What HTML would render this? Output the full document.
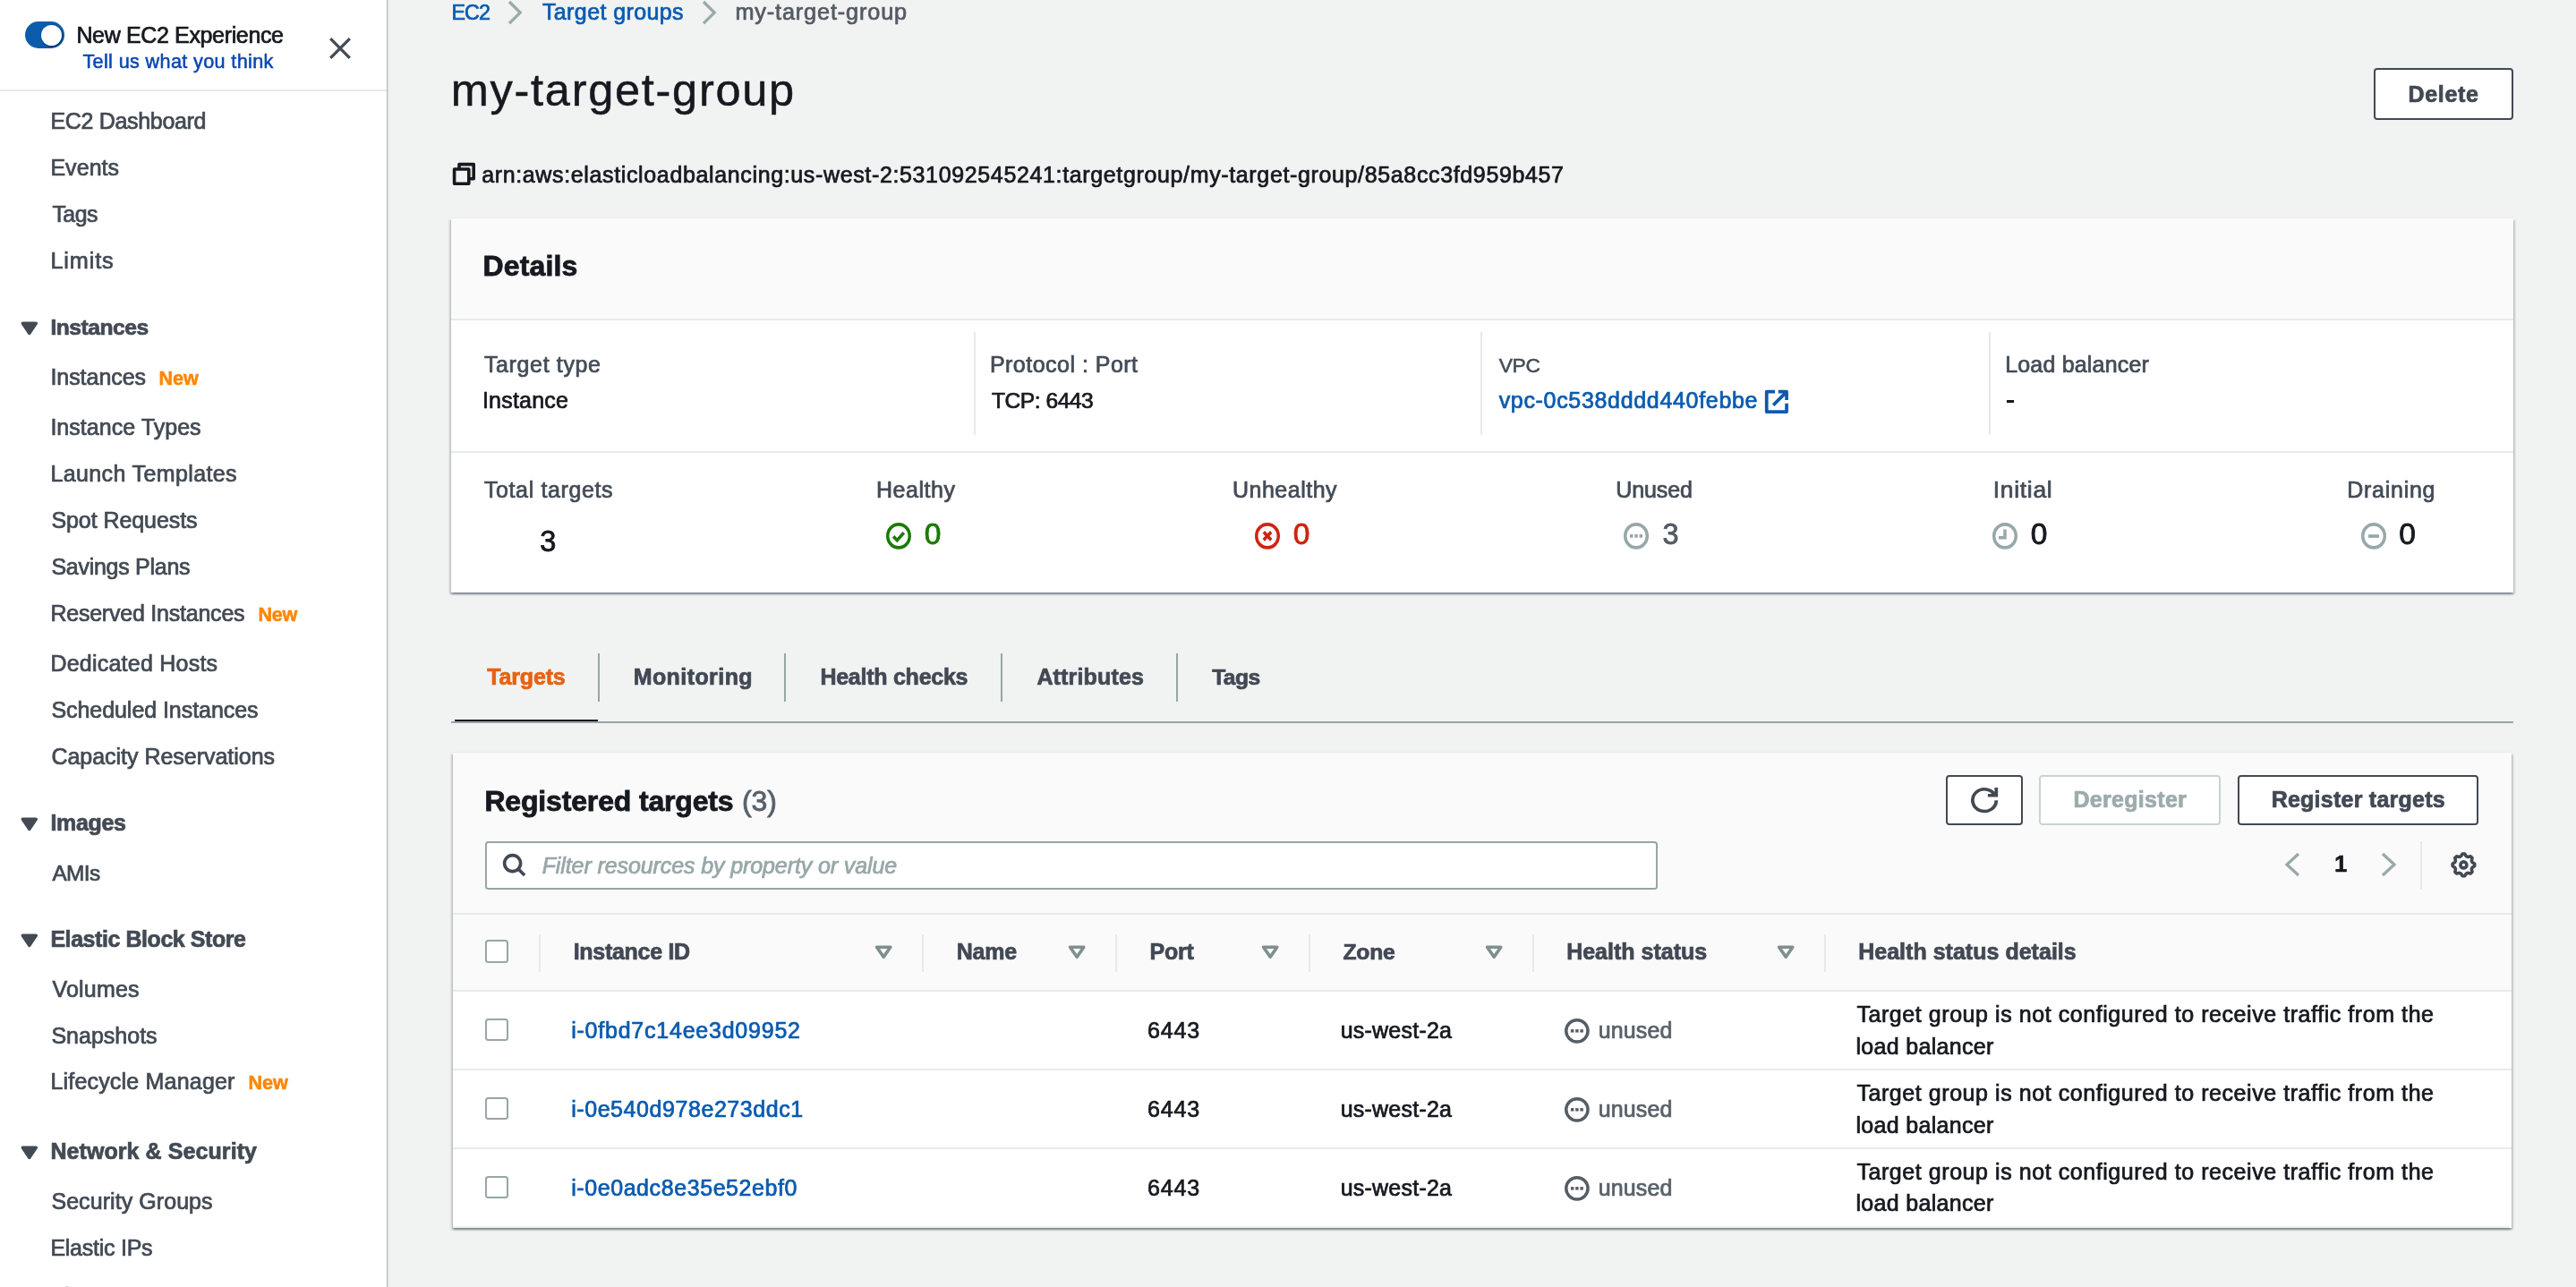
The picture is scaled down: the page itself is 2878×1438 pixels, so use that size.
<!DOCTYPE html>
<html><head><meta charset="utf-8"><title>Target groups | EC2 Management Console</title>
<style>
html,body{margin:0;padding:0;width:2878px;height:1438px;overflow:hidden}
body{width:2878px;height:1438px;overflow:hidden;background:#f1f2f2;position:relative;font-family:"Liberation Sans", sans-serif;}
body>div,body>svg,#t>span{position:absolute;display:block}
#t{position:absolute;left:0;top:0;width:2878px;height:1438px;overflow:hidden;will-change:transform}
#t>span{white-space:pre;line-height:1;font-family:"Liberation Sans", sans-serif;-webkit-text-stroke-color:currentColor}
svg{overflow:visible}
</style></head><body>
<div style="left:0.00px;top:0.00px;width:432.00px;height:1438.00px;background:#fff"></div>
<div style="left:432.00px;top:0.00px;width:1.00px;height:1438.00px;background:#b3bdbf"></div>
<div style="left:433.00px;top:0.00px;width:1.50px;height:1438.00px;background:linear-gradient(to right,#d9dede,#f1f2f2)"></div>
<div style="left:0.00px;top:99.50px;width:431.50px;height:2.00px;background:#e6eaea"></div>
<div style="left:27.80px;top:24.00px;width:44.40px;height:30.00px;background:#0b5cab;border-radius:15px"></div>
<div style="left:45.80px;top:27.60px;width:23.40px;height:23.40px;background:#fff;border-radius:50%;box-shadow:1px 1.5px 2px rgba(0,20,50,.55)"></div>
<svg style="left:366.00px;top:40.00px" width="28.00" height="28.00" viewBox="0 0 28 28" ><path d="M3.2 3.2 L24.8 24.8 M24.8 3.2 L3.2 24.8" stroke="#444b55" stroke-width="3.3" fill="none"/></svg>
<svg style="left:18.45px;top:352.10px" width="29.60" height="29.60" viewBox="0 0 16 16" ><polygon points="4,5 12,5 8,11" fill="#434a54" stroke="#434a54" stroke-width="2" stroke-linejoin="round"/></svg>
<svg style="left:18.45px;top:905.85px" width="29.60" height="29.60" viewBox="0 0 16 16" ><polygon points="4,5 12,5 8,11" fill="#434a54" stroke="#434a54" stroke-width="2" stroke-linejoin="round"/></svg>
<svg style="left:18.45px;top:1035.85px" width="29.60" height="29.60" viewBox="0 0 16 16" ><polygon points="4,5 12,5 8,11" fill="#434a54" stroke="#434a54" stroke-width="2" stroke-linejoin="round"/></svg>
<svg style="left:18.45px;top:1273.35px" width="29.60" height="29.60" viewBox="0 0 16 16" ><polygon points="4,5 12,5 8,11" fill="#434a54" stroke="#434a54" stroke-width="2" stroke-linejoin="round"/></svg>
<svg style="left:562.80px;top:-4.10px" width="24.20" height="36.20" viewBox="0 0 24.20 36.20"><polyline points="6.00,6.00 18.20,18.10 6.00,30.20" fill="none" stroke="#9aa9aa" stroke-width="3.3"/></svg>
<svg style="left:779.50px;top:-4.10px" width="24.20" height="36.20" viewBox="0 0 24.20 36.20"><polyline points="6.00,6.00 18.20,18.10 6.00,30.20" fill="none" stroke="#9aa9aa" stroke-width="3.3"/></svg>
<svg style="left:503.70px;top:180.20px" width="28.80" height="28.80" viewBox="0 0 16 16" ><path d="M2 5h9v9H2z M5 5V2h9v9h-3" fill="none" stroke="#16191f" stroke-width="2" stroke-linejoin="round"/></svg>
<div style="left:2652.00px;top:76.20px;width:155.80px;height:57.60px;background:#fff;border:2px solid #424954;border-radius:4px;box-sizing:border-box"></div>
<div style="left:504.00px;top:242.80px;width:2304.00px;height:1.00px;background:#e8ebeb"></div>
<div style="left:504.00px;top:243.70px;width:2304.00px;height:418.30px;background:#fff;box-shadow:0 2px 2px 0 rgba(0,28,36,.3),2px 2px 2px 0 rgba(0,28,36,.15),-2px 2px 2px 0 rgba(0,28,36,.15)"></div>
<div style="left:504.00px;top:243.70px;width:2304.00px;height:112.50px;background:#fafafa"></div>
<div style="left:504.00px;top:356.20px;width:2304.00px;height:2.00px;background:#e6eaea"></div>
<div style="left:1088.00px;top:370.75px;width:2.00px;height:115.00px;background:#e6eaea"></div>
<div style="left:1653.75px;top:370.75px;width:2.00px;height:115.00px;background:#e6eaea"></div>
<div style="left:2221.75px;top:370.75px;width:2.00px;height:115.00px;background:#e6eaea"></div>
<div style="left:504.00px;top:504.25px;width:2304.00px;height:2.00px;background:#e6eaea"></div>
<svg style="left:1970.20px;top:434.15px" width="29.80" height="29.80" viewBox="0 0 16 16" ><path d="M9 2h5v5 M6 10l8-8 M14 9v5H2V2h5" fill="none" stroke="#0a5bb0" stroke-width="2" stroke-linejoin="round"/></svg>
<div style="left:2241.75px;top:447.00px;width:8.40px;height:3.20px;background:#16191f"></div>
<svg style="left:989.90px;top:584.10px" width="28.00" height="29.75" viewBox="0 0 16 16"  preserveAspectRatio="none"><circle cx="8" cy="8" r="7" fill="none" stroke="#1d7a06" stroke-width="2"/><polyline points="4.6,8.3 7,10.6 11.3,6" fill="none" stroke="#1d7a06" stroke-width="2"/></svg>
<svg style="left:1401.70px;top:584.10px" width="28.00" height="29.75" viewBox="0 0 16 16"  preserveAspectRatio="none"><circle cx="8" cy="8" r="7" fill="none" stroke="#cf2410" stroke-width="2"/><path d="M5.6 5.6l4.8 4.8M10.4 5.6l-4.8 4.8" fill="none" stroke="#cf2410" stroke-width="2"/></svg>
<svg style="left:1814.00px;top:584.10px" width="28.00" height="29.75" viewBox="0 0 16 16"  preserveAspectRatio="none"><circle cx="8" cy="8" r="7" fill="none" stroke="#98a7a8" stroke-width="2"/><rect x="4" y="7" width="2" height="2" fill="#98a7a8"/><rect x="7" y="7" width="2" height="2" fill="#98a7a8"/><rect x="10" y="7" width="2" height="2" fill="#98a7a8"/></svg>
<svg style="left:2226.05px;top:584.10px" width="28.00" height="29.75" viewBox="0 0 16 16"  preserveAspectRatio="none"><circle cx="8" cy="8" r="7" fill="none" stroke="#98a7a8" stroke-width="2"/><polyline points="8,4 8,9 4,9" fill="none" stroke="#98a7a8" stroke-width="2"/></svg>
<svg style="left:2637.60px;top:584.10px" width="28.00" height="29.75" viewBox="0 0 16 16"  preserveAspectRatio="none"><circle cx="8" cy="8" r="7" fill="none" stroke="#98a7a8" stroke-width="2"/><path d="M4.6 8.1h6.8" fill="none" stroke="#98a7a8" stroke-width="2"/></svg>
<div style="left:667.75px;top:730.00px;width:2.00px;height:54.00px;background:#97a6a7"></div>
<div style="left:875.75px;top:730.00px;width:2.00px;height:54.00px;background:#97a6a7"></div>
<div style="left:1117.75px;top:730.00px;width:2.00px;height:54.00px;background:#97a6a7"></div>
<div style="left:1313.50px;top:730.00px;width:2.00px;height:54.00px;background:#97a6a7"></div>
<div style="left:504.00px;top:806.00px;width:2304.00px;height:1.80px;background:#97a6a7"></div>
<div style="left:508.00px;top:803.90px;width:159.50px;height:2.15px;background:#16191f"></div>
<div style="left:505.50px;top:840.40px;width:2300.50px;height:1.00px;background:#e8ebeb"></div>
<div style="left:505.50px;top:841.30px;width:2300.50px;height:530.60px;background:#fff;box-shadow:0 2px 2px 0 rgba(0,28,36,.3),2px 2px 2px 0 rgba(0,28,36,.15),-2px 2px 2px 0 rgba(0,28,36,.15)"></div>
<div style="left:505.50px;top:1370.20px;width:2297.50px;height:1.40px;background:#eef1f1"></div>
<div style="left:505.50px;top:841.30px;width:2300.50px;height:265.00px;background:#fafafa"></div>
<div style="left:2174.25px;top:866.20px;width:85.25px;height:55.60px;background:#fff;border-radius:4px;box-sizing:border-box;border:2px solid #424954"></div>
<div style="left:2278.25px;top:866.20px;width:203.00px;height:55.60px;background:#fff;border-radius:4px;box-sizing:border-box;border:2px solid #c8d3d4"></div>
<div style="left:2500.00px;top:866.20px;width:269.25px;height:55.60px;background:#fff;border-radius:4px;box-sizing:border-box;border:2px solid #424954"></div>
<svg style="left:2201.80px;top:879.70px" width="30.20" height="28.30" viewBox="0 0 16 16"  preserveAspectRatio="none"><path d="M10 5h5V0 M15 8A7 7 0 1 1 14.33 5" fill="none" stroke="#424954" stroke-width="2" stroke-linejoin="miter"/></svg>
<div style="left:542.20px;top:940.00px;width:1309.80px;height:53.90px;background:#fff;border:2px solid #97a6a7;border-radius:3.5px;box-sizing:border-box"></div>
<svg style="left:560.20px;top:952.00px" width="28.80" height="28.80" viewBox="0 0 16 16" ><circle cx="7" cy="7" r="5" fill="none" stroke="#424954" stroke-width="2"/><path d="M10.6 10.6L14.5 14.5" stroke="#424954" stroke-width="2" fill="none"/></svg>
<svg style="left:2549.00px;top:948.05px" width="25.00" height="36.00" viewBox="0 0 25.00 36.00"><polyline points="19.00,6.00 6.00,18.00 19.00,30.00" fill="none" stroke="#9aa9aa" stroke-width="3.3"/></svg>
<svg style="left:2655.60px;top:948.05px" width="25.00" height="36.00" viewBox="0 0 25.00 36.00"><polyline points="6.00,6.00 19.00,18.00 6.00,30.00" fill="none" stroke="#9aa9aa" stroke-width="3.3"/></svg>
<div style="left:2703.50px;top:940.00px;width:2.00px;height:53.75px;background:#e6eaea"></div>
<svg style="left:2737.60px;top:951.60px" width="28.80" height="28.80" viewBox="0 0 16 16" ><path d="M14.85 8.00L14.85 8.12L14.85 8.24L14.84 8.36L14.83 8.48L14.82 8.60L14.81 8.72L14.68 8.82L14.53 8.92L14.38 9.01L14.22 9.10L14.07 9.18L13.93 9.26L13.80 9.34L13.69 9.42L13.59 9.50L13.50 9.58L13.43 9.66L13.36 9.74L13.31 9.83L13.27 9.92L13.23 10.01L13.19 10.10L13.15 10.19L13.12 10.28L13.08 10.37L13.05 10.46L13.02 10.56L13.01 10.66L13.00 10.77L13.01 10.89L13.03 11.02L13.05 11.16L13.09 11.30L13.13 11.46L13.18 11.62L13.22 11.80L13.27 11.97L13.31 12.15L13.32 12.31L13.25 12.40L13.17 12.49L13.09 12.58L13.01 12.67L12.93 12.76L12.84 12.84L12.76 12.93L12.67 13.01L12.58 13.09L12.49 13.17L12.40 13.25L12.31 13.32L12.15 13.31L11.97 13.27L11.80 13.22L11.62 13.18L11.46 13.13L11.30 13.09L11.16 13.05L11.02 13.03L10.89 13.01L10.77 13.00L10.66 13.01L10.56 13.02L10.46 13.05L10.37 13.08L10.28 13.12L10.19 13.15L10.10 13.19L10.01 13.23L9.92 13.27L9.83 13.31L9.74 13.36L9.66 13.43L9.58 13.50L9.50 13.59L9.42 13.69L9.34 13.80L9.26 13.93L9.18 14.07L9.10 14.22L9.01 14.38L8.92 14.53L8.82 14.68L8.72 14.81L8.60 14.82L8.48 14.83L8.36 14.84L8.24 14.85L8.12 14.85L8.00 14.85L7.88 14.85L7.76 14.85L7.64 14.84L7.52 14.83L7.40 14.82L7.28 14.81L7.18 14.68L7.08 14.53L6.99 14.38L6.90 14.22L6.82 14.07L6.74 13.93L6.66 13.80L6.58 13.69L6.50 13.59L6.42 13.50L6.34 13.43L6.26 13.36L6.17 13.31L6.08 13.27L5.99 13.23L5.90 13.19L5.81 13.15L5.72 13.12L5.63 13.08L5.54 13.05L5.44 13.02L5.34 13.01L5.23 13.00L5.11 13.01L4.98 13.03L4.84 13.05L4.70 13.09L4.54 13.13L4.38 13.18L4.20 13.22L4.03 13.27L3.85 13.31L3.69 13.32L3.60 13.25L3.51 13.17L3.42 13.09L3.33 13.01L3.24 12.93L3.16 12.84L3.07 12.76L2.99 12.67L2.91 12.58L2.83 12.49L2.75 12.40L2.68 12.31L2.69 12.15L2.73 11.97L2.78 11.80L2.82 11.62L2.87 11.46L2.91 11.30L2.95 11.16L2.97 11.02L2.99 10.89L3.00 10.77L2.99 10.66L2.98 10.56L2.95 10.46L2.92 10.37L2.88 10.28L2.85 10.19L2.81 10.10L2.77 10.01L2.73 9.92L2.69 9.83L2.64 9.74L2.57 9.66L2.50 9.58L2.41 9.50L2.31 9.42L2.20 9.34L2.07 9.26L1.93 9.18L1.78 9.10L1.62 9.01L1.47 8.92L1.32 8.82L1.19 8.72L1.18 8.60L1.17 8.48L1.16 8.36L1.15 8.24L1.15 8.12L1.15 8.00L1.15 7.88L1.15 7.76L1.16 7.64L1.17 7.52L1.18 7.40L1.19 7.28L1.32 7.18L1.47 7.08L1.62 6.99L1.78 6.90L1.93 6.82L2.07 6.74L2.20 6.66L2.31 6.58L2.41 6.50L2.50 6.42L2.57 6.34L2.64 6.26L2.69 6.17L2.73 6.08L2.77 5.99L2.81 5.90L2.85 5.81L2.88 5.72L2.92 5.63L2.95 5.54L2.98 5.44L2.99 5.34L3.00 5.23L2.99 5.11L2.97 4.98L2.95 4.84L2.91 4.70L2.87 4.54L2.82 4.38L2.78 4.20L2.73 4.03L2.69 3.85L2.68 3.69L2.75 3.60L2.83 3.51L2.91 3.42L2.99 3.33L3.07 3.24L3.16 3.16L3.24 3.07L3.33 2.99L3.42 2.91L3.51 2.83L3.60 2.75L3.69 2.68L3.85 2.69L4.03 2.73L4.20 2.78L4.38 2.82L4.54 2.87L4.70 2.91L4.84 2.95L4.98 2.97L5.11 2.99L5.23 3.00L5.34 2.99L5.44 2.98L5.54 2.95L5.63 2.92L5.72 2.88L5.81 2.85L5.90 2.81L5.99 2.77L6.08 2.73L6.17 2.69L6.26 2.64L6.34 2.57L6.42 2.50L6.50 2.41L6.58 2.31L6.66 2.20L6.74 2.07L6.82 1.93L6.90 1.78L6.99 1.62L7.08 1.47L7.18 1.32L7.28 1.19L7.40 1.18L7.52 1.17L7.64 1.16L7.76 1.15L7.88 1.15L8.00 1.15L8.12 1.15L8.24 1.15L8.36 1.16L8.48 1.17L8.60 1.18L8.72 1.19L8.82 1.32L8.92 1.47L9.01 1.62L9.10 1.78L9.18 1.93L9.26 2.07L9.34 2.20L9.42 2.31L9.50 2.41L9.58 2.50L9.66 2.57L9.74 2.64L9.83 2.69L9.92 2.73L10.01 2.77L10.10 2.81L10.19 2.85L10.28 2.88L10.37 2.92L10.46 2.95L10.56 2.98L10.66 2.99L10.77 3.00L10.89 2.99L11.02 2.97L11.16 2.95L11.30 2.91L11.46 2.87L11.62 2.82L11.80 2.78L11.97 2.73L12.15 2.69L12.31 2.68L12.40 2.75L12.49 2.83L12.58 2.91L12.67 2.99L12.76 3.07L12.84 3.16L12.93 3.24L13.01 3.33L13.09 3.42L13.17 3.51L13.25 3.60L13.32 3.69L13.31 3.85L13.27 4.03L13.22 4.20L13.18 4.38L13.13 4.54L13.09 4.70L13.05 4.84L13.03 4.98L13.01 5.11L13.00 5.23L13.01 5.34L13.02 5.44L13.05 5.54L13.08 5.63L13.12 5.72L13.15 5.81L13.19 5.90L13.23 5.99L13.27 6.08L13.31 6.17L13.36 6.26L13.43 6.34L13.50 6.42L13.59 6.50L13.69 6.58L13.80 6.66L13.93 6.74L14.07 6.82L14.22 6.90L14.38 6.99L14.53 7.08L14.68 7.18L14.81 7.28L14.82 7.40L14.83 7.52L14.84 7.64L14.85 7.76L14.85 7.88Z" fill="none" stroke="#424954" stroke-width="2" stroke-linejoin="round"/><circle cx="8" cy="8" r="1.95" fill="none" stroke="#424954" stroke-width="2"/></svg>
<div style="left:505.50px;top:1019.50px;width:2300.50px;height:2.00px;background:#e6eaea"></div>
<div style="left:505.50px;top:1105.50px;width:2300.50px;height:2.00px;background:#e6eaea"></div>
<div style="left:542.00px;top:1050.00px;width:26.00px;height:25.75px;background:#fff;border:2px solid #97a6a7;border-radius:3.5px;box-sizing:border-box"></div>
<div style="left:602.00px;top:1044.00px;width:2.00px;height:42.00px;background:#e6eaea"></div>
<div style="left:1029.60px;top:1044.00px;width:2.00px;height:42.00px;background:#e6eaea"></div>
<div style="left:1245.75px;top:1044.00px;width:2.00px;height:42.00px;background:#e6eaea"></div>
<div style="left:1461.50px;top:1044.00px;width:2.00px;height:42.00px;background:#e6eaea"></div>
<div style="left:1712.00px;top:1044.00px;width:2.00px;height:42.00px;background:#e6eaea"></div>
<div style="left:2037.75px;top:1044.00px;width:2.00px;height:42.00px;background:#e6eaea"></div>
<svg style="left:971.71px;top:1049.27px" width="30.40" height="29.36" viewBox="0 0 16 16"  preserveAspectRatio="none"><polygon points="4,5 12,5 8,11" fill="#fff" stroke="#7f8e8f" stroke-width="1.9" stroke-linejoin="round"/></svg>
<svg style="left:1188.45px;top:1049.27px" width="30.40" height="29.36" viewBox="0 0 16 16"  preserveAspectRatio="none"><polygon points="4,5 12,5 8,11" fill="#fff" stroke="#7f8e8f" stroke-width="1.9" stroke-linejoin="round"/></svg>
<svg style="left:1404.20px;top:1049.27px" width="30.40" height="29.36" viewBox="0 0 16 16"  preserveAspectRatio="none"><polygon points="4,5 12,5 8,11" fill="#fff" stroke="#7f8e8f" stroke-width="1.9" stroke-linejoin="round"/></svg>
<svg style="left:1654.20px;top:1049.27px" width="30.40" height="29.36" viewBox="0 0 16 16"  preserveAspectRatio="none"><polygon points="4,5 12,5 8,11" fill="#fff" stroke="#7f8e8f" stroke-width="1.9" stroke-linejoin="round"/></svg>
<svg style="left:1979.70px;top:1049.27px" width="30.40" height="29.36" viewBox="0 0 16 16"  preserveAspectRatio="none"><polygon points="4,5 12,5 8,11" fill="#fff" stroke="#7f8e8f" stroke-width="1.9" stroke-linejoin="round"/></svg>
<div style="left:542.00px;top:1138.25px;width:26.00px;height:25.00px;background:#fff;border:2px solid #97a6a7;border-radius:3.5px;box-sizing:border-box"></div>
<svg style="left:1748.05px;top:1138.05px" width="27.80" height="27.70" viewBox="0 0 16 16"  preserveAspectRatio="none"><circle cx="8" cy="8" r="7" fill="none" stroke="#555d66" stroke-width="2"/><rect x="4" y="7" width="2" height="2" fill="#555d66"/><rect x="7" y="7" width="2" height="2" fill="#555d66"/><rect x="10" y="7" width="2" height="2" fill="#555d66"/></svg>
<div style="left:505.50px;top:1194.00px;width:2300.50px;height:2.00px;background:#e6eaea"></div>
<div style="left:542.00px;top:1226.00px;width:26.00px;height:25.00px;background:#fff;border:2px solid #97a6a7;border-radius:3.5px;box-sizing:border-box"></div>
<svg style="left:1748.05px;top:1225.80px" width="27.80" height="27.70" viewBox="0 0 16 16"  preserveAspectRatio="none"><circle cx="8" cy="8" r="7" fill="none" stroke="#555d66" stroke-width="2"/><rect x="4" y="7" width="2" height="2" fill="#555d66"/><rect x="7" y="7" width="2" height="2" fill="#555d66"/><rect x="10" y="7" width="2" height="2" fill="#555d66"/></svg>
<div style="left:505.50px;top:1281.75px;width:2300.50px;height:2.00px;background:#e6eaea"></div>
<div style="left:542.00px;top:1313.75px;width:26.00px;height:25.00px;background:#fff;border:2px solid #97a6a7;border-radius:3.5px;box-sizing:border-box"></div>
<svg style="left:1748.05px;top:1313.55px" width="27.80" height="27.70" viewBox="0 0 16 16"  preserveAspectRatio="none"><circle cx="8" cy="8" r="7" fill="none" stroke="#555d66" stroke-width="2"/><rect x="4" y="7" width="2" height="2" fill="#555d66"/><rect x="7" y="7" width="2" height="2" fill="#555d66"/><rect x="10" y="7" width="2" height="2" fill="#555d66"/></svg>
<div id="t">
<span style="left:85.40px;top:27.00px;font-size:25px;color:#16191f;-webkit-text-stroke-width:0.74px;letter-spacing:-0.354px;">New EC2 Experience</span>
<span style="left:92.40px;top:57.50px;font-size:21.6px;color:#0a47b4;-webkit-text-stroke-width:0.55px;letter-spacing:0.369px;">Tell us what you think</span>
<span style="left:56.40px;top:122.70px;font-size:25px;color:#434a54;-webkit-text-stroke-width:0.74px;letter-spacing:-0.316px;">EC2 Dashboard</span>
<span style="left:56.40px;top:174.70px;font-size:25px;color:#434a54;-webkit-text-stroke-width:0.74px;letter-spacing:0.053px;">Events</span>
<span style="left:58.40px;top:226.50px;font-size:24.87px;color:#434a54;-webkit-text-stroke-width:0.74px;letter-spacing:-0.462px;">Tags</span>
<span style="left:56.40px;top:278.50px;font-size:25.26px;color:#434a54;-webkit-text-stroke-width:0.74px;letter-spacing:0.878px;">Limits</span>
<span style="left:56.40px;top:409.00px;font-size:25px;color:#434a54;-webkit-text-stroke-width:0.74px;letter-spacing:-0.039px;">Instances</span>
<span style="left:177.40px;top:412.00px;font-size:21.6px;color:#fd8704;-webkit-text-stroke-width:0.55px;font-weight:700;letter-spacing:0.045px;">New</span>
<span style="left:56.40px;top:464.75px;font-size:25px;color:#434a54;-webkit-text-stroke-width:0.74px;letter-spacing:0.038px;">Instance Types</span>
<span style="left:56.40px;top:516.50px;font-size:25px;color:#434a54;-webkit-text-stroke-width:0.74px;letter-spacing:0.382px;">Launch Templates</span>
<span style="left:57.40px;top:568.50px;font-size:25px;color:#434a54;-webkit-text-stroke-width:0.74px;letter-spacing:-0.067px;">Spot Requests</span>
<span style="left:57.40px;top:620.50px;font-size:25px;color:#434a54;-webkit-text-stroke-width:0.74px;letter-spacing:-0.270px;">Savings Plans</span>
<span style="left:56.40px;top:673.00px;font-size:25px;color:#434a54;-webkit-text-stroke-width:0.74px;letter-spacing:-0.221px;">Reserved Instances</span>
<span style="left:288.40px;top:676.00px;font-size:21.6px;color:#fd8704;-webkit-text-stroke-width:0.55px;font-weight:700;letter-spacing:-0.205px;">New</span>
<span style="left:56.40px;top:728.75px;font-size:25px;color:#434a54;-webkit-text-stroke-width:0.74px;letter-spacing:0.233px;">Dedicated Hosts</span>
<span style="left:57.40px;top:781.00px;font-size:25px;color:#434a54;-webkit-text-stroke-width:0.74px;letter-spacing:-0.051px;">Scheduled Instances</span>
<span style="left:57.40px;top:833.00px;font-size:25px;color:#434a54;-webkit-text-stroke-width:0.74px;letter-spacing:-0.021px;">Capacity Reservations</span>
<span style="left:58.40px;top:963.50px;font-size:24.38px;color:#434a54;-webkit-text-stroke-width:0.74px;letter-spacing:-0.548px;">AMIs</span>
<span style="left:58.40px;top:1092.50px;font-size:25px;color:#434a54;-webkit-text-stroke-width:0.74px;letter-spacing:0.218px;">Volumes</span>
<span style="left:57.40px;top:1144.50px;font-size:25px;color:#434a54;-webkit-text-stroke-width:0.74px;letter-spacing:0.007px;">Snapshots</span>
<span style="left:56.40px;top:1196.00px;font-size:25px;color:#434a54;-webkit-text-stroke-width:0.74px;letter-spacing:0.196px;">Lifecycle Manager</span>
<span style="left:277.40px;top:1199.00px;font-size:21.6px;color:#fd8704;-webkit-text-stroke-width:0.55px;font-weight:700;letter-spacing:0.045px;">New</span>
<span style="left:57.40px;top:1330.00px;font-size:25px;color:#434a54;-webkit-text-stroke-width:0.74px;letter-spacing:0.068px;">Security Groups</span>
<span style="left:56.40px;top:1382.00px;font-size:25px;color:#434a54;-webkit-text-stroke-width:0.74px;letter-spacing:-0.250px;">Elastic IPs</span>
<span style="left:56.40px;top:1436.30px;font-size:24.38px;color:#434a54;-webkit-text-stroke-width:0.74px;letter-spacing:-0.466px;">Placement Groups</span>
<span style="left:56.40px;top:354.00px;font-size:24.64px;color:#434a54;-webkit-text-stroke-width:0.74px;font-weight:700;letter-spacing:-0.464px;">Instances</span>
<span style="left:56.40px;top:906.75px;font-size:25px;color:#434a54;-webkit-text-stroke-width:0.74px;font-weight:700;letter-spacing:-0.314px;">Images</span>
<span style="left:56.40px;top:1036.75px;font-size:24.91px;color:#434a54;-webkit-text-stroke-width:0.74px;font-weight:700;letter-spacing:-0.394px;">Elastic Block Store</span>
<span style="left:56.40px;top:1274.25px;font-size:25px;color:#434a54;-webkit-text-stroke-width:0.74px;font-weight:700;letter-spacing:0.080px;">Network &amp; Security</span>
<span style="left:504.40px;top:3.00px;font-size:23.29px;color:#0a5bb0;-webkit-text-stroke-width:0.74px;letter-spacing:-0.824px;">EC2</span>
<span style="left:605.90px;top:1.00px;font-size:25px;color:#0a5bb0;-webkit-text-stroke-width:0.74px;letter-spacing:0.402px;">Target groups</span>
<span style="left:821.40px;top:1.00px;font-size:25.26px;color:#545b64;-webkit-text-stroke-width:0.74px;letter-spacing:0.866px;">my-target-group</span>
<span style="left:503.80px;top:76.00px;font-size:50.51px;color:#16191f;-webkit-text-stroke-width:0.50px;letter-spacing:1.724px;">my-target-group</span>
<span style="left:538.15px;top:182.75px;font-size:25px;color:#16191f;-webkit-text-stroke-width:0.74px;letter-spacing:0.641px;">arn:aws:elasticloadbalancing:us-west-2:531092545241:targetgroup/my-target-group/85a8cc3fd959b457</span>
<span style="left:2690.40px;top:92.75px;font-size:25px;color:#424954;-webkit-text-stroke-width:0.74px;font-weight:700;letter-spacing:0.711px;">Delete</span>
<span style="left:539.40px;top:281.00px;font-size:32px;color:#16191f;-webkit-text-stroke-width:0.85px;font-weight:700;letter-spacing:0.177px;">Details</span>
<span style="left:540.90px;top:394.75px;font-size:25px;color:#444c57;-webkit-text-stroke-width:0.74px;letter-spacing:0.642px;">Target type</span>
<span style="left:538.90px;top:434.75px;font-size:25px;color:#16191f;-webkit-text-stroke-width:0.74px;letter-spacing:0.227px;">Instance</span>
<span style="left:1105.90px;top:394.75px;font-size:25px;color:#444c57;-webkit-text-stroke-width:0.74px;letter-spacing:0.481px;">Protocol : Port</span>
<span style="left:1107.90px;top:435.75px;font-size:24.62px;color:#16191f;-webkit-text-stroke-width:0.74px;letter-spacing:-0.469px;">TCP: 6443</span>
<span style="left:1674.65px;top:396.75px;font-size:22.81px;color:#444c57;-webkit-text-stroke-width:0.55px;letter-spacing:-0.231px;">VPC</span>
<span style="left:1674.65px;top:434.75px;font-size:25px;color:#0a5bb0;-webkit-text-stroke-width:0.74px;letter-spacing:0.681px;">vpc-0c538dddd440febbe</span>
<span style="left:2240.15px;top:394.75px;font-size:25px;color:#444c57;-webkit-text-stroke-width:0.74px;letter-spacing:0.192px;">Load balancer</span>
<span style="left:540.90px;top:534.75px;font-size:25px;color:#444c57;-webkit-text-stroke-width:0.74px;letter-spacing:0.626px;">Total targets</span>
<span style="left:603.30px;top:589.20px;font-size:32.5px;color:#16191f;-webkit-text-stroke-width:0.85px;">3</span>
<span style="left:978.90px;top:534.75px;font-size:25px;color:#444c57;-webkit-text-stroke-width:0.74px;letter-spacing:0.572px;">Healthy</span>
<span style="left:1376.90px;top:534.75px;font-size:25px;color:#444c57;-webkit-text-stroke-width:0.74px;letter-spacing:0.515px;">Unhealthy</span>
<span style="left:1805.15px;top:534.75px;font-size:25px;color:#444c57;-webkit-text-stroke-width:0.74px;letter-spacing:-0.064px;">Unused</span>
<span style="left:2226.65px;top:533.75px;font-size:26.5px;color:#444c57;-webkit-text-stroke-width:0.74px;letter-spacing:0.702px;">Initial</span>
<span style="left:2622.15px;top:534.75px;font-size:25px;color:#444c57;-webkit-text-stroke-width:0.74px;letter-spacing:0.749px;">Draining</span>
<span style="left:1032.80px;top:580.30px;font-size:33.5px;color:#1d7a06;-webkit-text-stroke-width:0.85px;">0</span>
<span style="left:1444.80px;top:580.30px;font-size:33.5px;color:#cf2410;-webkit-text-stroke-width:0.85px;">0</span>
<span style="left:1857.60px;top:581.30px;font-size:32.5px;color:#545b64;-webkit-text-stroke-width:0.85px;">3</span>
<span style="left:2268.80px;top:580.30px;font-size:33.5px;color:#16191f;-webkit-text-stroke-width:0.85px;">0</span>
<span style="left:2680.20px;top:580.30px;font-size:33.5px;color:#16191f;-webkit-text-stroke-width:0.85px;">0</span>
<span style="left:544.15px;top:744.00px;font-size:25px;color:#e8610f;-webkit-text-stroke-width:0.74px;font-weight:700;letter-spacing:-0.142px;">Targets</span>
<span style="left:707.65px;top:744.00px;font-size:25px;color:#424954;-webkit-text-stroke-width:0.74px;font-weight:700;letter-spacing:0.426px;">Monitoring</span>
<span style="left:916.40px;top:744.00px;font-size:25px;color:#424954;-webkit-text-stroke-width:0.74px;font-weight:700;letter-spacing:-0.253px;">Health checks</span>
<span style="left:1158.40px;top:744.00px;font-size:25px;color:#424954;-webkit-text-stroke-width:0.74px;font-weight:700;letter-spacing:0.171px;">Attributes</span>
<span style="left:1354.15px;top:745.00px;font-size:24.64px;color:#424954;-webkit-text-stroke-width:0.74px;font-weight:700;letter-spacing:-0.504px;">Tags</span>
<span style="left:541.40px;top:878.50px;font-size:32px;color:#16191f;-webkit-text-stroke-width:0.85px;font-weight:700;letter-spacing:-0.161px;">Registered targets</span>
<span style="left:828.90px;top:878.50px;font-size:32px;color:#59616a;-webkit-text-stroke-width:0.85px;">(3)</span>
<span style="left:2316.40px;top:880.75px;font-size:25px;color:#9dabac;-webkit-text-stroke-width:0.74px;font-weight:700;letter-spacing:0.306px;">Deregister</span>
<span style="left:2537.65px;top:880.75px;font-size:25px;color:#424954;-webkit-text-stroke-width:0.74px;font-weight:700;letter-spacing:0.250px;">Register targets</span>
<span style="left:605.70px;top:954.70px;font-size:25px;color:#98a7a8;-webkit-text-stroke-width:0.74px;font-style:italic;letter-spacing:-0.101px;">Filter resources by property or value</span>
<span style="left:2608.15px;top:952.75px;font-size:25px;color:#16191f;-webkit-text-stroke-width:0.74px;font-weight:700;">1</span>
<span style="left:640.65px;top:1050.50px;font-size:25px;color:#424954;-webkit-text-stroke-width:0.74px;font-weight:700;letter-spacing:-0.287px;">Instance ID</span>
<span style="left:1068.65px;top:1050.50px;font-size:25px;color:#424954;-webkit-text-stroke-width:0.74px;font-weight:700;letter-spacing:-0.163px;">Name</span>
<span style="left:1284.40px;top:1050.50px;font-size:25px;color:#424954;-webkit-text-stroke-width:0.74px;font-weight:700;letter-spacing:-0.158px;">Port</span>
<span style="left:1500.40px;top:1051.50px;font-size:24.68px;color:#424954;-webkit-text-stroke-width:0.74px;font-weight:700;letter-spacing:-0.172px;">Zone</span>
<span style="left:1750.15px;top:1050.50px;font-size:25px;color:#424954;-webkit-text-stroke-width:0.74px;font-weight:700;letter-spacing:0.010px;">Health status</span>
<span style="left:2076.15px;top:1050.50px;font-size:25px;color:#424954;-webkit-text-stroke-width:0.74px;font-weight:700;letter-spacing:0.023px;">Health status details</span>
<span style="left:638.15px;top:1139.00px;font-size:25px;color:#0a5bb0;-webkit-text-stroke-width:0.74px;letter-spacing:0.776px;">i-0fbd7c14ee3d09952</span>
<span style="left:1281.90px;top:1139.00px;font-size:25.08px;color:#16191f;-webkit-text-stroke-width:0.74px;letter-spacing:0.867px;">6443</span>
<span style="left:1497.65px;top:1139.00px;font-size:25px;color:#16191f;-webkit-text-stroke-width:0.74px;letter-spacing:0.232px;">us-west-2a</span>
<span style="left:1785.65px;top:1139.00px;font-size:25px;color:#59616a;-webkit-text-stroke-width:0.74px;letter-spacing:0.165px;">unused</span>
<span style="left:2074.40px;top:1121.00px;font-size:25px;color:#16191f;-webkit-text-stroke-width:0.74px;letter-spacing:0.566px;">Target group is not configured to receive traffic from the</span>
<span style="left:2073.40px;top:1156.90px;font-size:25px;color:#16191f;-webkit-text-stroke-width:0.74px;letter-spacing:0.325px;">load balancer</span>
<span style="left:638.15px;top:1226.75px;font-size:25px;color:#0a5bb0;-webkit-text-stroke-width:0.74px;letter-spacing:0.570px;">i-0e540d978e273ddc1</span>
<span style="left:1281.90px;top:1226.75px;font-size:25.08px;color:#16191f;-webkit-text-stroke-width:0.74px;letter-spacing:0.867px;">6443</span>
<span style="left:1497.65px;top:1226.75px;font-size:25px;color:#16191f;-webkit-text-stroke-width:0.74px;letter-spacing:0.232px;">us-west-2a</span>
<span style="left:1785.65px;top:1226.75px;font-size:25px;color:#59616a;-webkit-text-stroke-width:0.74px;letter-spacing:0.165px;">unused</span>
<span style="left:2074.40px;top:1208.75px;font-size:25px;color:#16191f;-webkit-text-stroke-width:0.74px;letter-spacing:0.566px;">Target group is not configured to receive traffic from the</span>
<span style="left:2073.40px;top:1244.65px;font-size:25px;color:#16191f;-webkit-text-stroke-width:0.74px;letter-spacing:0.325px;">load balancer</span>
<span style="left:638.15px;top:1314.50px;font-size:25px;color:#0a5bb0;-webkit-text-stroke-width:0.74px;letter-spacing:0.581px;">i-0e0adc8e35e52ebf0</span>
<span style="left:1281.90px;top:1314.50px;font-size:25.08px;color:#16191f;-webkit-text-stroke-width:0.74px;letter-spacing:0.867px;">6443</span>
<span style="left:1497.65px;top:1314.50px;font-size:25px;color:#16191f;-webkit-text-stroke-width:0.74px;letter-spacing:0.232px;">us-west-2a</span>
<span style="left:1785.65px;top:1314.50px;font-size:25px;color:#59616a;-webkit-text-stroke-width:0.74px;letter-spacing:0.165px;">unused</span>
<span style="left:2074.40px;top:1296.50px;font-size:25px;color:#16191f;-webkit-text-stroke-width:0.74px;letter-spacing:0.566px;">Target group is not configured to receive traffic from the</span>
<span style="left:2073.40px;top:1332.40px;font-size:25px;color:#16191f;-webkit-text-stroke-width:0.74px;letter-spacing:0.325px;">load balancer</span>
</div>
</body></html>
